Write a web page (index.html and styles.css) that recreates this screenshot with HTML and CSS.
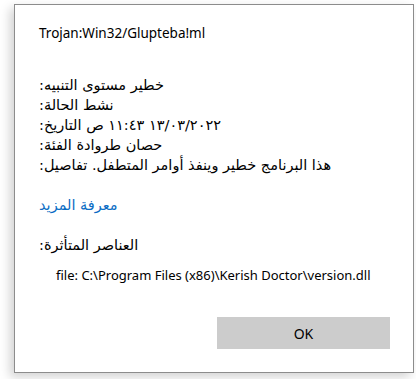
FILE: index.html
```html
<!DOCTYPE html>
<html lang="ar">
<head>
<meta charset="utf-8">
<title>Windows Security</title>
<link rel="stylesheet" href="styles.css">
</head>
<body>
<div class="dialog">
  <div class="title" dir="ltr">Trojan:Win32/Glupteba!ml</div>
  <div class="details">
    <div class="ar" dir="rtl">خطير مستوى التنبيه:</div>
    <div class="ar" dir="rtl">نشط الحالة:</div>
    <div class="ar" dir="rtl">١٣/٠٣/٢٠٢٢ ١١:٤٣ ص التاريخ:</div>
    <div class="ar" dir="rtl">حصان طروادة الفئة:</div>
    <div class="ar" dir="rtl">هذا البرنامج خطير وينفذ أوامر المتطفل. تفاصيل:</div>
  </div>
  <div class="ar link" dir="rtl">معرفة المزيد</div>
  <div class="ar affected" dir="rtl">العناصر المتأثرة:</div>
  <div class="file" dir="ltr">file: C:\Program Files (x86)\Kerish Doctor\version.dll</div>
  <div class="actions">
    <button class="ok" type="button">OK</button>
  </div>
</div>
</body>
</html>
```
FILE: styles.css
```css
html, body {
  margin: 0;
  padding: 0;
  background: #ffffff;
}
body {
  width: 416px;
  height: 379px;
  overflow: hidden;
  font-family: "Noto Sans", "DejaVu Sans", sans-serif;
  font-size: 14px;
  color: #000;
}
.dialog {
  box-sizing: border-box;
  margin: 4px 2px 0 14px;
  width: 400px;
  height: 369px;
  border: 1px solid #8c8c8c;
  background: #fff;
  box-shadow: -4px 4px 10px rgba(0,0,0,0.18);
  padding: 18px 23px 0 24px;
  display: flex;
  flex-direction: column;
}
.title {
  line-height: 20px;
  font-size: 13.5px;
}
.details {
  margin-top: 32px;
  display: flex;
  flex-direction: column;
}
.ar {
  text-align: left;
  line-height: 20px;
  font-family: "DejaVu Sans", sans-serif;
  font-size: 14.5px;
}
.link {
  margin-top: 20px;
  color: #0a6cc4;
}
.affected {
  margin-top: 20px;
}
.file {
  margin-top: 10px;
  padding-left: 17px;
  line-height: 20px;
  font-size: 13px;
}
.actions {
  margin-top: 32px;
  display: flex;
  justify-content: flex-end;
}
.ok {
  width: 173px;
  height: 32px;
  border: none;
  background: #cccccc;
  font-family: "Noto Sans", sans-serif;
  font-size: 14px;
  color: #000;
  padding: 0;
}
```
